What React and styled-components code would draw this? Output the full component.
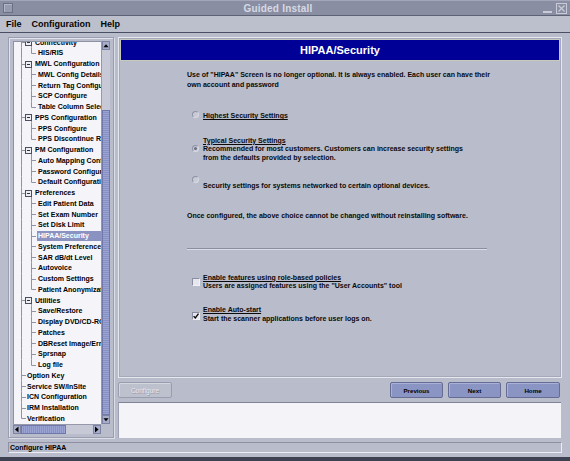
import React from 'react';
import styled, { createGlobalStyle } from 'styled-components';

const GlobalStyle = createGlobalStyle`
  html, body { margin: 0; padding: 0; background: #b9bcca; }
  body { font-family: "Liberation Sans", Arial, sans-serif; }
  * { box-sizing: border-box; }
`;

const Window = styled.div`
  width: 570px;
  height: 461px;
  display: flex;
  flex-direction: column;
  background: #b9bcca;
  border-bottom: 4px solid #3d4152;
  overflow: hidden;
  font-family: "Liberation Sans", Arial, sans-serif;
  font-weight: bold;
  color: #000;
`;

const TitleBar = styled.div`
  height: 16px;
  flex: none;
  display: flex;
  align-items: center;
  padding: 0 3px;
  background: #8a8ea3;
  border-top: 1px solid #a3a7b9;
  border-bottom: 1px solid #5e6275;
`;

const TitleIcon = styled.div`
  width: 10px;
  height: 10px;
  border: 1px solid #6c7084;
  background: #979bb0;
  box-shadow: inset 1px 1px 0 #b2b6c6;
`;

const TitleText = styled.div`
  flex: 1;
  text-align: center;
  color: #d6d9e3;
  font-size: 10px;
  letter-spacing: 0.2px;
`;

const TitleControls = styled.div`
  display: flex;
  align-items: center;
  gap: 4px;
`;

const MinimizeGlyph = styled.div`
  width: 9px;
  height: 10px;
  border-bottom: 2px solid #c9ccd8;
`;

const CloseBox = styled.div`
  width: 11px;
  height: 11px;
  border: 1px solid #c9ccd8;
  display: flex;
  align-items: center;
  justify-content: center;
`;

const MenuBar = styled.div`
  height: 17px;
  flex: none;
  display: flex;
  align-items: center;
  padding-left: 1px;
  background: #bcbfcc;
  border-bottom: 1px solid #4a4e62;
`;

const MenuItem = styled.div`
  padding: 0 5px;
  font-size: 9px;
  color: #050505;
`;

const Main = styled.div`
  flex: none;
  height: 405px;
  display: flex;
  gap: 4px;
  padding: 4px 8px 0 8px;
`;

const LeftPanel = styled.div`
  width: 106px;
  flex: none;
  border: 1px solid #9b9eb0;
  box-shadow: inset 1px 1px 0 #e2e4ec, 1px 1px 0 #dcdee7;
  padding: 3px 3px 3px 4px;
`;

const TreeScroll = styled.div`
  display: grid;
  grid-template-columns: 88px 9px;
  grid-template-rows: 383px 10px;
  height: 100%;
`;

const TreeViewport = styled.div`
  background: #f5f5f9;
  overflow: hidden;
  border-top: 1px solid #8e92a4;
  border-left: 1px solid #8e92a4;
`;

const TreeList = styled.div`
  margin-top: -4.8px;
`;

const Row = styled.div`
  height: 10.76px;
  display: flex;
  align-items: center;
  white-space: nowrap;
`;

const Guide = styled.svg`
  flex: none;
  display: block;
`;

const Label = styled.span`
  font-size: 7px;
  line-height: 10px;
  padding: 0 1px;
  flex: none;
  color: ${p => (p.$selected ? '#ffffff' : '#000000')};
  background: ${p => (p.$selected ? '#8a92c2' : 'transparent')};
  width: ${p => (p.$selected ? '70px' : 'auto')};
`;

const VBar = styled.div`
  display: flex;
  flex-direction: column;
  background: #c7c9d6;
  border-left: 1px solid #9599ab;
`;

const HBar = styled.div`
  display: flex;
  background: #c7c9d6;
  border-top: 1px solid #9599ab;
`;

const Corner = styled.div`
  background: #b9bcca;
`;

const ArrowButton = styled.div`
  flex: none;
  width: ${p => (p.$horizontal ? '8px' : '100%')};
  height: ${p => (p.$horizontal ? '100%' : '9px')};
  background: #a7acc8;
  border: 1px solid #7d83a3;
  display: flex;
  align-items: center;
  justify-content: center;
`;

const Track = styled.div`
  flex: 1;
  display: flex;
  flex-direction: ${p => (p.$horizontal ? 'row' : 'column')};
`;

const TrackGap = styled.div`
  flex: 0 0 ${p => p.$size}px;
`;

const Thumb = styled.div`
  flex: ${p => (p.$size ? `0 0 ${p.$size}px` : '1')};
  background-color: #8c96c8;
  background-image: ${p =>
    p.$horizontal
      ? 'repeating-linear-gradient(90deg, #9aa3d2 0 1px, #8891c4 1px 2px)'
      : 'repeating-linear-gradient(180deg, #9aa3d2 0 1px, #8891c4 1px 2px)'};
  border: 1px solid #6f78a8;
`;

const RightColumn = styled.div`
  flex: 1;
  display: flex;
  flex-direction: column;
  gap: 4px;
`;

const ContentPanel = styled.div`
  height: 341px;
  flex: none;
  border: 1px solid #e6e8ef;
  box-shadow: inset 0 0 0 1px #a6a9ba;
  padding: 1px;
  display: flex;
  flex-direction: column;
`;

const Header = styled.div`
  height: 22px;
  flex: none;
  background: #000096;
  border: 1px solid #c6cabc;
  color: #ffffff;
  font-size: 11px;
  display: flex;
  align-items: center;
  justify-content: center;
`;

const Body = styled.div`
  width: 306px;
  margin: 0 auto;
  display: flex;
  flex-direction: column;
  font-size: 7px;
  color: #0a0a0a;
  white-space: nowrap;
`;

const Paragraph = styled.div`
  margin-top: ${p => p.$top}px;
  line-height: ${p => p.$lh || 9.5}px;
`;

const Option = styled.div`
  margin-top: ${p => p.$top}px;
  display: flex;
  align-items: center;
  padding-left: 5px;
  gap: ${p => p.$gap || 4}px;
`;

const OptionText = styled.div`
  line-height: ${p => p.$lh || 9}px;
`;

const Under = styled.span`
  text-decoration: underline;
  text-underline-offset: 1px;
`;

const Radio = styled.div`
  width: 7px;
  height: 7px;
  flex: none;
  border-radius: 50%;
  margin-bottom: 3px;
  background: #c8cad6;
  border: 1px solid;
  border-color: #8e92a4 #d8dae3 #d8dae3 #8e92a4;
  display: flex;
  align-items: center;
  justify-content: center;
  &::after {
    content: '';
    width: 3px;
    height: 3px;
    border-radius: 50%;
    background: ${p => (p.$checked ? '#6a6e80' : 'transparent')};
  }
`;

const Check = styled.div`
  width: 8px;
  height: 8px;
  flex: none;
  background: #e6e7ee;
  border: 1px solid;
  border-color: #8a8ea0 #f2f2f6 #f2f2f6 #8a8ea0;
  display: flex;
  align-items: center;
  justify-content: center;
  margin-bottom: ${p => p.$shift || 0}px;
`;

const Separator = styled.div`
  margin-top: ${p => p.$top}px;
  width: 300px;
  height: 2px;
  border-top: 1px solid #8a8ea0;
  border-bottom: 1px solid #dcdee6;
`;

const ButtonRow = styled.div`
  height: 16px;
  flex: none;
  display: flex;
  gap: 5px;
  padding-right: 2px;
`;

const Spacer = styled.div`
  flex: 1;
`;

const Button = styled.div`
  width: ${p => p.$w || 53}px;
  height: 16px;
  border-radius: 2px;
  display: flex;
  align-items: center;
  justify-content: center;
  font-size: ${p => (p.$disabled ? 6.5 : 6.2)}px;
  font-weight: ${p => (p.$disabled ? 'normal' : 'bold')};
  color: ${p => (p.$disabled ? '#e6e7ee' : '#000000')};
  background: ${p => (p.$disabled ? '#bdc0cd' : '#8b95c3')};
  border: 1px solid ${p => (p.$disabled ? '#9a9db0' : '#666d94')};
  box-shadow: inset 1px 1px 0 ${p => (p.$disabled ? '#d4d6e0' : '#a9b1d8')};
  text-shadow: ${p => (p.$disabled ? '0.6px 0.6px 0 #979aad' : 'none')};
`;

const MessageArea = styled.div`
  height: 36px;
  flex: none;
  margin-right: 1px;
  background: #f3f3f8;
  border-top: 1px solid #7f8395;
  border-left: 1px solid #9ea1b2;
`;

const StatusBar = styled.div`
  flex: none;
  margin: 4px 8px 0 8px;
  height: 11px;
  border: 1px solid;
  border-color: #8e91a3 #eceef4 #eceef4 #8e91a3;
  font-size: 7px;
  line-height: 10px;
  padding-left: 1px;
`;

const LINE = '#8f93a3';

const tree = [
  { t: 'Connectivity', l: 1, g: true },
  { t: 'HIS/RIS', l: 2, last: true },
  { t: 'MWL Configuration', l: 1, g: true },
  { t: 'MWL Config Details', l: 2 },
  { t: 'Return Tag Configure', l: 2 },
  { t: 'SCP Configure', l: 2 },
  { t: 'Table Column Selection', l: 2, last: true },
  { t: 'PPS Configuration', l: 1, g: true },
  { t: 'PPS Configure', l: 2 },
  { t: 'PPS Discontinue Reasons', l: 2, last: true },
  { t: 'PM Configuration', l: 1, g: true },
  { t: 'Auto Mapping Configure', l: 2 },
  { t: 'Password Configure', l: 2 },
  { t: 'Default Configuration', l: 2, last: true },
  { t: 'Preferences', l: 1, g: true },
  { t: 'Edit Patient Data', l: 2 },
  { t: 'Set Exam Number', l: 2 },
  { t: 'Set Disk Limit', l: 2 },
  { t: 'HIPAA/Security', l: 2, sel: true },
  { t: 'System Preferences', l: 2 },
  { t: 'SAR dB/dt Level', l: 2 },
  { t: 'Autovoice', l: 2 },
  { t: 'Custom Settings', l: 2 },
  { t: 'Patient Anonymization', l: 2, last: true },
  { t: 'Utilities', l: 1, g: true },
  { t: 'Save/Restore', l: 2 },
  { t: 'Display DVD/CD-ROM', l: 2 },
  { t: 'Patches', l: 2 },
  { t: 'DBReset Image/Error', l: 2 },
  { t: 'Sprsnap', l: 2 },
  { t: 'Log file', l: 2, last: true },
  { t: 'Option Key', l: 1 },
  { t: 'Service SW/InSite', l: 1 },
  { t: 'ICN Configuration', l: 1 },
  { t: 'IRM Installation', l: 1 },
  { t: 'Verification', l: 1, rootLast: true },
];

const H = 10.76;
const C = 5.5;

function TreeGuide({ node }) {
  const w = node.l === 2 ? 23 : node.g ? 20 : 12;
  return (
    <Guide width={w} height={H} viewBox={`0 0 ${w} ${H}`}>
      <line x1="7.5" y1="0" x2="7.5" y2={node.rootLast ? C : H} stroke={LINE} strokeWidth="1" />
      {node.l === 1 && !node.g && (
        <line x1="7.5" y1={C} x2="12" y2={C} stroke={LINE} strokeWidth="1" />
      )}
      {node.g && (
        <g>
          <line x1="7.5" y1={C} x2="12" y2={C} stroke={LINE} strokeWidth="1" />
          <line x1="17.5" y1={C + 3} x2="17.5" y2={H} stroke={LINE} strokeWidth="1" />
          <rect x="11.5" y={C - 3} width="6" height="6" fill="#eef0f5" stroke="#4b4e5e" strokeWidth="1" />
          <line x1="13" y1={C} x2="16" y2={C} stroke="#2a2c38" strokeWidth="1" />
        </g>
      )}
      {node.l === 2 && (
        <g>
          <line x1="17.5" y1="0" x2="17.5" y2={node.last ? C : H} stroke={LINE} strokeWidth="1" />
          <line x1="17.5" y1={C} x2="22" y2={C} stroke={LINE} strokeWidth="1" />
        </g>
      )}
    </Guide>
  );
}

function Tri({ dir }) {
  const pts = {
    up: '0.5,4.5 3.5,1 6.5,4.5',
    down: '0.5,1 3.5,4.5 6.5,1',
    left: '4.5,0.5 1,3.5 4.5,6.5',
    right: '1,0.5 4.5,3.5 1,6.5',
  }[dir];
  const vertical = dir === 'up' || dir === 'down';
  return (
    <svg width={vertical ? 7 : 6} height={vertical ? 6 : 7} viewBox={vertical ? '0 0 7 6' : '0 0 6 7'}>
      <polygon points={pts} fill="#000" />
    </svg>
  );
}

function CheckMark() {
  return (
    <svg width="6" height="6" viewBox="0 0 6 6">
      <path d="M0.6 3.1 L2.3 4.9 L5.5 0.6" fill="none" stroke="#000" strokeWidth="1.3" />
    </svg>
  );
}

export default function App() {
  return (
    <>
      <GlobalStyle />
      <Window>
        <TitleBar>
          <TitleIcon />
          <TitleText>Guided Install</TitleText>
          <TitleControls>
            <MinimizeGlyph />
            <CloseBox>
              <svg width="7" height="7" viewBox="0 0 7 7">
                <path d="M0.5 0.5 L6.5 6.5 M6.5 0.5 L0.5 6.5" stroke="#c9ccd8" strokeWidth="1.2" />
              </svg>
            </CloseBox>
          </TitleControls>
        </TitleBar>
        <MenuBar>
          <MenuItem>File</MenuItem>
          <MenuItem>Configuration</MenuItem>
          <MenuItem>Help</MenuItem>
        </MenuBar>
        <Main>
          <LeftPanel>
            <TreeScroll>
              <TreeViewport>
                <TreeList>
                  {tree.map(n => (
                    <Row key={n.t}>
                      <TreeGuide node={n} />
                      <Label $selected={n.sel}>{n.t}</Label>
                    </Row>
                  ))}
                </TreeList>
              </TreeViewport>
              <VBar>
                <ArrowButton><Tri dir="up" /></ArrowButton>
                <Track>
                  <TrackGap $size={60} />
                  <Thumb />
                </Track>
                <ArrowButton><Tri dir="down" /></ArrowButton>
              </VBar>
              <HBar>
                <ArrowButton $horizontal><Tri dir="left" /></ArrowButton>
                <Track $horizontal>
                  <Thumb $horizontal $size={45} />
                </Track>
                <ArrowButton $horizontal><Tri dir="right" /></ArrowButton>
              </HBar>
              <Corner />
            </TreeScroll>
          </LeftPanel>
          <RightColumn>
            <ContentPanel>
              <Header>HIPAA/Security</Header>
              <Body>
                <Paragraph $top={9}>
                  Use of "HIPAA" Screen is no longer optional. It is always enabled. Each user can have their
                  <br />
                  own account and password
                </Paragraph>
                <Option $top={21.5}>
                  <Radio />
                  <OptionText><Under>Highest Security Settings</Under></OptionText>
                </Option>
                <Option $top={16.3}>
                  <Radio $checked />
                  <OptionText $lh={8.5}>
                    <Under>Typical Security Settings</Under>
                    <br />
                    Recommended for most customers. Customers can increase security settings
                    <br />
                    from the defaults provided by selection.
                  </OptionText>
                </Option>
                <Option $top={10.2}>
                  <Radio />
                  <OptionText>
                    &nbsp;
                    <br />
                    Security settings for systems networked to certain optional devices.
                  </OptionText>
                </Option>
                <Paragraph $top={21}>
                  Once configured, the above choice cannot be changed without reinstalling software.
                </Paragraph>
                <Separator $top={27} />
                <Option $top={23.8} $gap={3}>
                  <Check />
                  <OptionText $lh={8.5}>
                    <Under>Enable features using role-based policies</Under>
                    <br />
                    Users are assigned features using the "User Accounts" tool
                  </OptionText>
                </Option>
                <Option $top={14.3} $gap={3}>
                  <Check $shift={-3}><CheckMark /></Check>
                  <OptionText $lh={9}>
                    <Under>Enable Auto-start</Under>
                    <br />
                    Start the scanner applications before user logs on.
                  </OptionText>
                </Option>
              </Body>
            </ContentPanel>
            <ButtonRow>
              <Button $disabled $w={54}>Configure</Button>
              <Spacer />
              <Button>Previous</Button>
              <Button>Next</Button>
              <Button $w={54}>Home</Button>
            </ButtonRow>
            <MessageArea />
          </RightColumn>
        </Main>
        <StatusBar>Configure HIPAA</StatusBar>
      </Window>
    </>
  );
}
